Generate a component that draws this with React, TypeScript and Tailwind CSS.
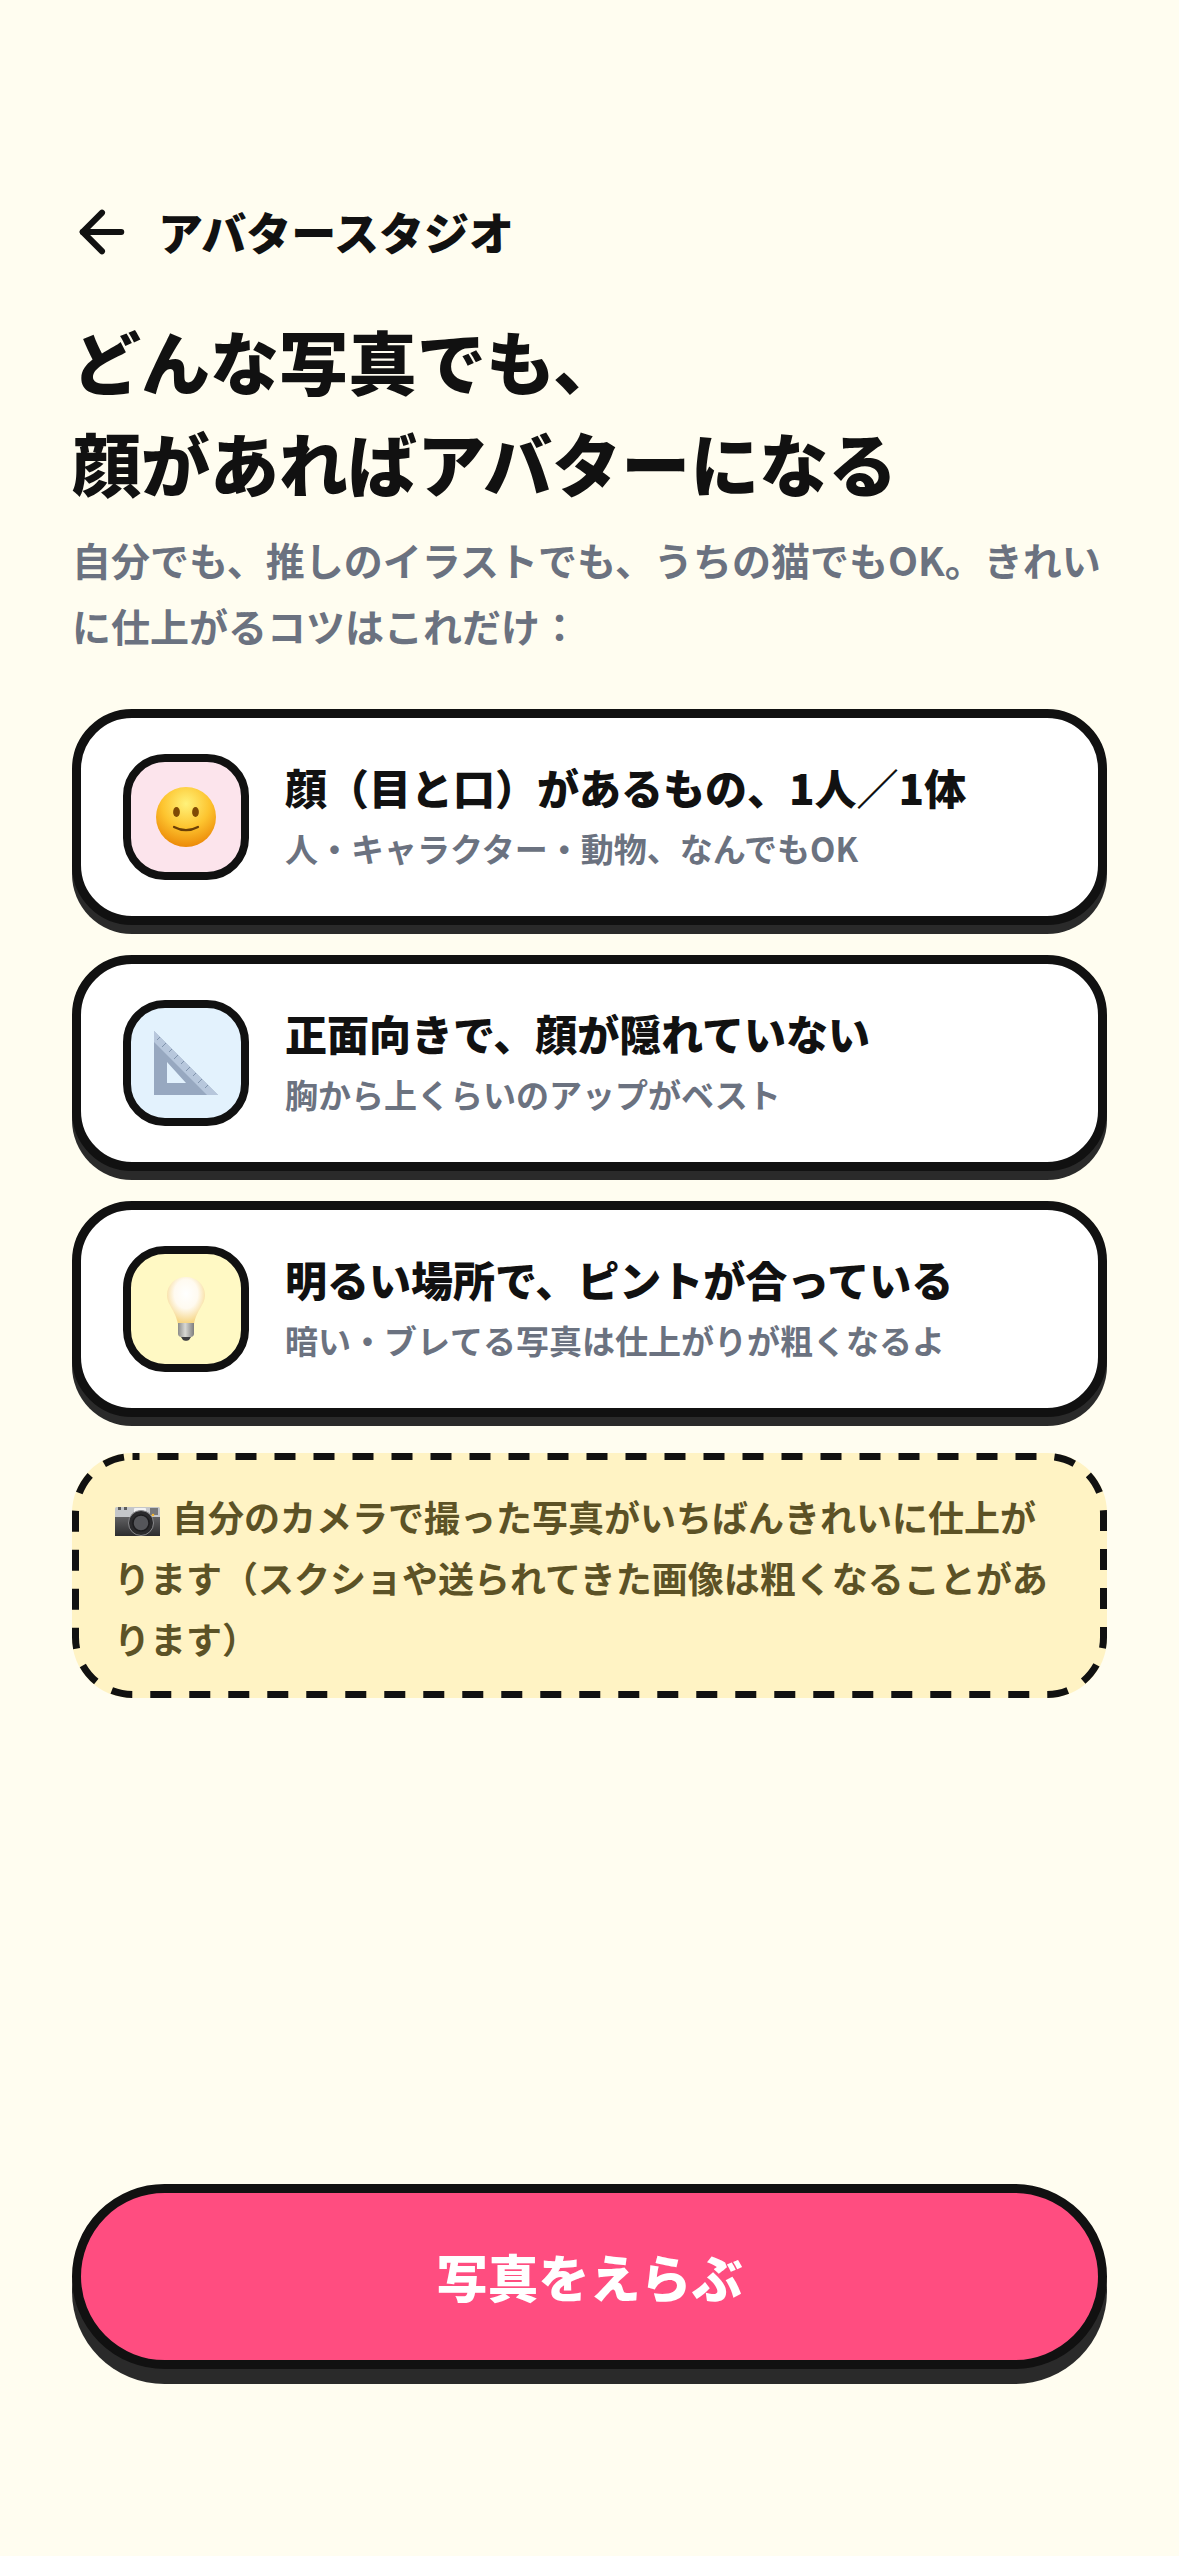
import { ArrowLeft } from "lucide-react";
import type { ReactNode } from "react";

function SmileEmoji() {
  return (
    <svg width="60" height="60" viewBox="0 0 60 60">
      <defs>
        <radialGradient id="face" cx="50%" cy="28%" r="72%">
          <stop offset="0%" stopColor="#fff27a" />
          <stop offset="55%" stopColor="#fdc42f" />
          <stop offset="100%" stopColor="#ec8a08" />
        </radialGradient>
      </defs>
      <circle cx="30" cy="30" r="30" fill="url(#face)" />
      <ellipse cx="20.5" cy="25" rx="3.4" ry="5" fill="#7f4a05" />
      <ellipse cx="39.5" cy="25" rx="3.4" ry="5" fill="#7f4a05" />
      <path d="M18 40c7.5 4 16.5 4 24 0" fill="none" stroke="#6b3f06" strokeWidth="2.2" strokeLinecap="round" />
    </svg>
  );
}

function RulerEmoji() {
  return (
    <svg width="64" height="64" viewBox="0 0 64 64">
      <path fillRule="evenodd" d="M0 0 64 64H0ZM13 31V52H32Z" fill="#97a8c0" />
      <path d="M0 0 64 64H53L0 11Z" fill="#b7c7dc" />
      <path
        d="M6 6 3 9M12 12 8 16M18 18 15 21M24 24 20 28M30 30 27 33M36 36 32 40M42 42 39 45M48 48 44 52M54 54 51 57"
        stroke="#8094ad"
        strokeWidth="1"
      />
    </svg>
  );
}

function BulbEmoji() {
  return (
    <svg width="38" height="64" viewBox="0 0 38 64">
      <defs>
        <radialGradient id="glass" cx="50%" cy="36%" r="62%">
          <stop offset="0%" stopColor="#ffffff" />
          <stop offset="50%" stopColor="#fffaf0" />
          <stop offset="100%" stopColor="#f6d584" />
        </radialGradient>
        <linearGradient id="base" x1="0" x2="1" y1="0" y2="0">
          <stop offset="0%" stopColor="#8c8c8a" />
          <stop offset="45%" stopColor="#d8d8d4" />
          <stop offset="100%" stopColor="#7d7d7d" />
        </linearGradient>
      </defs>
      <path d="M19 0C8 0 0 8 0 18c0 10 8 14 11 29h16c3-15 11-19 11-29C38 8 30 0 19 0Z" fill="url(#glass)" />
      <path d="M11 46h16v11c0 2-2 3-3 3H14c-1 0-3-1-3-3Z" fill="url(#base)" />
      <path d="M14 60h10l-2 3c-1 1-5 1-6 0Z" fill="#3d3d40" />
    </svg>
  );
}

function CameraEmoji() {
  return (
    <svg width="45" height="30" viewBox="0 0 45 30" className="mr-[12px] ml-px inline-block align-[-4px]">
      <defs>
        <linearGradient id="body" x1="0" x2="0" y1="0" y2="1">
          <stop offset="0%" stopColor="#606062" />
          <stop offset="100%" stopColor="#2c2c2e" />
        </linearGradient>
      </defs>
      <rect x="0" y="1" width="45" height="12" rx="1.5" fill="#c4c6c9" />
      <rect x="0" y="11" width="45" height="19" fill="url(#body)" />
      <rect x="19" y="2" width="12" height="4" rx="1" fill="#f2f2f2" />
      <rect x="35" y="2" width="8" height="7" fill="#77787a" />
      <rect x="3" y="1" width="3" height="3" fill="#5c5c5e" />
      <rect x="9" y="1" width="3" height="3" fill="#5c5c5e" />
      <circle cx="26" cy="17" r="12.5" fill="#2a2a2c" stroke="#8a8a8d" strokeWidth="1" />
      <circle cx="26" cy="17" r="8" fill="#55565a" stroke="#1c1c1e" strokeWidth="1.5" />
      <circle cx="38" cy="9" r="1.3" fill="#f2b632" />
    </svg>
  );
}

type Tip = {
  title: string;
  sub: string;
  tint: string;
  icon: ReactNode;
};

const TIPS: Tip[] = [
  {
    title: "顔（目と口）があるもの、1人／1体",
    sub: "人・キャラクター・動物、なんでもOK",
    tint: "bg-[#fce4ec]",
    icon: <SmileEmoji />,
  },
  {
    title: "正面向きで、顔が隠れていない",
    sub: "胸から上くらいのアップがベスト",
    tint: "bg-[#e3f2fd]",
    icon: <RulerEmoji />,
  },
  {
    title: "明るい場所で、ピントが合っている",
    sub: "暗い・ブレてる写真は仕上がりが粗くなるよ",
    tint: "bg-[#fff9c4]",
    icon: <BulbEmoji />,
  },
];

function TipCard({ tip }: { tip: Tip }) {
  return (
    <div className="flex h-[216px] items-center gap-[36px] rounded-[60px] border-[9px] border-[#111111] bg-white pl-[42px] shadow-[0_9px_0_#2a2a2a]">
      <div
        className={`flex h-[126px] w-[126px] shrink-0 items-center justify-center rounded-[42px] border-[8px] border-[#111111] ${tip.tint}`}
      >
        {tip.icon}
      </div>
      <div className="pb-[6px]">
        <div className="text-[42px] leading-[60px] font-black text-[#111111]">{tip.title}</div>
        <div className="mt-[8px] text-[33px] leading-[46px] font-bold text-[#6b7280]">{tip.sub}</div>
      </div>
    </div>
  );
}

export default function App() {
  return (
    <div className="flex h-[2556px] flex-col bg-[#fffdf0] px-[72px] pt-[202px] pb-[187px] font-['Noto_Sans_CJK_JP',sans-serif]">
      <div className="flex h-[60px] items-center gap-[23px]">
        <ArrowLeft className="-ml-[3px] h-[66px] w-[66px] text-[#111111]" strokeWidth={2.2} />
        <h2 className="text-[45px] leading-[60px] font-black text-[#111111]">アバタースタジオ</h2>
      </div>

      <h1 className="mt-[47px] text-[69px] leading-[102px] font-black text-[#111111]">
        どんな写真でも、
        <br />
        顔があればアバターになる
      </h1>
      <p className="mt-[13px] text-[39px] leading-[66px] font-bold text-[#6b7280]">
        自分でも、推しのイラストでも、うちの猫でもOK。きれいに仕上がるコツはこれだけ：
      </p>

      <div className="mt-[51px] flex flex-col gap-[30px]">
        {TIPS.map((tip) => (
          <TipCard key={tip.title} tip={tip} />
        ))}
      </div>

      <div className="relative mt-[36px] rounded-[60px] bg-[#fff3c4] px-[42px] pt-[33px] pb-[29px] text-[36px] leading-[61px] font-bold text-[#5c5226]">
        {/* long dashes, a css dashed border comes out too short at this size */}
        <svg className="absolute inset-0" width="1035" height="245" viewBox="0 0 1035 245" fill="none">
          <rect
            x="3.5"
            y="3.5"
            width="1028"
            height="238"
            rx="57"
            stroke="#111111"
            strokeWidth="7"
            strokeDasharray="21 18"
            strokeDashoffset="14"
          />
        </svg>
        <CameraEmoji />
        自分のカメラで撮った写真がいちばんきれいに仕上がります（スクショや送られてきた画像は粗くなることがあります）
      </div>

      <button className="mt-auto h-[185px] w-full rounded-full border-[9px] border-[#111111] bg-[#ff4d80] text-[51px] font-black text-white shadow-[0_15px_0_#2a2a2a]">
        写真をえらぶ
      </button>
    </div>
  );
}
